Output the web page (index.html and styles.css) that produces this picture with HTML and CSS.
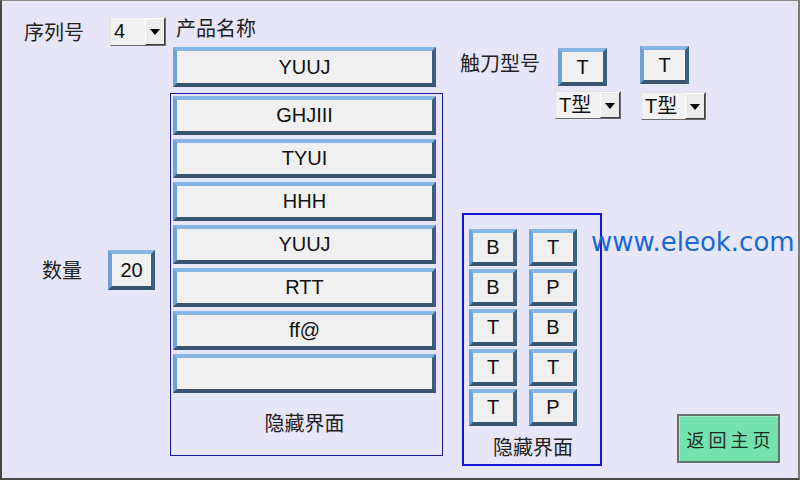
FILE: index.html
```html
<!DOCTYPE html>
<html lang="zh-CN">
<head>
  <meta charset="UTF-8">
  <title>产品设置</title>
  <link rel="stylesheet" href="styles.css">
</head>
<body>
  <div class="screen">
    <div class="col-left">
      <div class="seq-row">
        <span class="label seq-label">序列号</span>
        <div class="combo seq-combo"><span class="combo-text">4</span><span class="combo-arrow"></span></div>
      </div>
      <div class="qty-row">
        <span class="label qty-label">数量</span>
        <div class="btn qty-box">20</div>
      </div>
    </div>

    <div class="col-product">
      <div class="label product-label">产品名称</div>
      <div class="btn product-name">YUUJ</div>
      <div class="panel list-panel">
        <div class="btn list-btn">GHJIII</div>
        <div class="btn list-btn">TYUI</div>
        <div class="btn list-btn">HHH</div>
        <div class="btn list-btn">YUUJ</div>
        <div class="btn list-btn">RTT</div>
        <div class="btn list-btn">ff@</div>
        <div class="btn list-btn"></div>
        <div class="label panel-caption">隐藏界面</div>
      </div>
    </div>

    <div class="col-tool">
      <div class="tool-row">
        <span class="label tool-label">触刀型号</span>
        <div class="tool-group first">
          <div class="btn tool-btn">T</div>
          <div class="combo tool-combo"><span class="combo-text">T型</span><span class="combo-arrow"></span></div>
        </div>
        <div class="tool-group second">
          <div class="btn tool-btn">T</div>
          <div class="combo tool-combo"><span class="combo-text">T型</span><span class="combo-arrow"></span></div>
        </div>
      </div>
      <div class="lower">
        <div class="panel code-panel">
          <div class="code-grid">
            <div class="btn code-btn">B</div>
            <div class="btn code-btn">T</div>
            <div class="btn code-btn">B</div>
            <div class="btn code-btn">P</div>
            <div class="btn code-btn">T</div>
            <div class="btn code-btn">B</div>
            <div class="btn code-btn">T</div>
            <div class="btn code-btn">T</div>
            <div class="btn code-btn">T</div>
            <div class="btn code-btn">P</div>
          </div>
          <div class="label panel-caption small">隐藏界面</div>
        </div>
        <div class="side">
          <div class="site">www.eleok.com</div>
          <div class="home-btn">返回主页</div>
        </div>
      </div>
    </div>
  </div>
</body>
</html>
```

FILE: styles.css
```css
* {
  box-sizing: border-box;
}
body {
  margin: 0;
  background: #e6e6f8;
  font-family: "Liberation Sans", Arial, "Noto Sans CJK SC", sans-serif;
}
.screen {
  width: 800px;
  height: 480px;
  display: flex;
  overflow: hidden;
  background: #e6e6f8;
  border-left: 2px solid #464646;
  border-top: 1px solid #8a8a8a;
  border-right: 2px solid #7c7c7c;
  border-bottom: 2px solid #4a4a4a;
}
.label {
  font-family: "Noto Sans CJK SC", sans-serif;
  font-size: 20px;
  line-height: 24px;
  color: #222;
}

/* raised blue-edged key */
.btn {
  display: flex;
  align-items: center;
  justify-content: center;
  background: #f0f0f0;
  color: #111;
  font-size: 20px;
  border: 4px solid;
  border-color: #86b6e6 #3d5f80 #37556f #6fa3d6;
}

/* drop-down box */
.combo {
  display: flex;
  background: #f2f2f2;
  border-top: 1px solid #e2e2e2;
  border-left: 1px solid #e2e2e2;
  border-right: 1px solid #6a6a6a;
  border-bottom: 1px solid #6a6a6a;
}
.combo-text {
  flex: 1;
  font-size: 20px;
  line-height: 26px;
  padding-left: 3px;
  color: #111;
}
.combo-arrow {
  width: 20px;
  position: relative;
  background: #ececec;
  border-left: 1px solid #fff;
  border-top: 1px solid #fff;
  border-right: 1px solid #404040;
  border-bottom: 1px solid #404040;
}
.combo-arrow::after {
  content: "";
  position: absolute;
  left: 4px;
  top: 10px;
  border-left: 5px solid transparent;
  border-right: 5px solid transparent;
  border-top: 6px solid #000;
}

/* left column */
.col-left {
  width: 168px;
}
.seq-row {
  display: flex;
  align-items: center;
  margin-top: 16px;
  padding-left: 22px;
}
.seq-label {
  width: 86px;
}
.seq-combo {
  width: 56px;
  height: 29px;
}
.qty-row {
  display: flex;
  align-items: center;
  margin-top: 204px;
  padding-left: 40px;
}
.qty-label {
  width: 66px;
}
.qty-box {
  width: 47px;
  height: 40px;
}

/* product column */
.col-product {
  width: 273px;
}
.product-label {
  margin-top: 15px;
  padding-left: 6px;
}
.product-name {
  width: 263px;
  height: 40px;
  margin: 7px 0 0 3px;
}
.panel {
  display: flex;
  flex-direction: column;
}
.list-panel {
  height: 363px;
  margin-top: 6px;
  border: 1px solid #1c1c96;
  padding: 2px 0 0 2px;
  gap: 4px;
}
.list-btn {
  width: 263px;
  height: 39px;
}
.panel-caption {
  margin-top: 14px;
  text-align: center;
  padding-right: 6px;
}

/* tool column */
.col-tool {
  flex: 1;
  display: flex;
  flex-direction: column;
}
.tool-row {
  display: flex;
  align-items: flex-start;
  height: 119px;
  padding-left: 17px;
  padding-top: 45px;
}
.tool-label {
  width: 95px;
  margin-top: 5px;
}
.tool-group {
  display: flex;
  flex-direction: column;
}
.tool-group.first {
  margin-top: 2px;
  width: 66px;
}
.tool-group.second {
  margin-left: 19px;
  width: 66px;
}
.tool-btn {
  width: 49px;
  height: 38px;
  margin-left: 3px;
}
.tool-group.second .tool-btn {
  margin-left: 0;
}
.tool-combo {
  height: 28px;
  margin-top: 5px;
}
.tool-group.second .tool-combo {
  margin-top: 8px;
  margin-left: 1px;
}
.lower {
  display: flex;
  margin-top: 93px;
  padding-left: 19px;
}
.code-panel {
  width: 140px;
  height: 253px;
  border: 2px solid #1414cc;
  padding: 14px 0 0 5px;
}
.code-grid {
  display: grid;
  grid-template-columns: 48px 48px;
  grid-auto-rows: 37px;
  column-gap: 12px;
  row-gap: 3px;
}
.code-btn {
  font-size: 20px;
}
.panel-caption.small {
  margin-top: 9px;
  padding-right: 3px;
}
.side {
  flex: 1;
  display: flex;
  flex-direction: column;
  margin-left: -11px;
}
.site {
  margin-top: 14px;
  font-family: "DejaVu Sans", Verdana, sans-serif;
  font-size: 26px;
  line-height: 30px;
  color: #1a68d2;
  white-space: nowrap;
}
.home-btn {
  margin: auto 0 3px 86px;
  width: 103px;
  height: 49px;
  display: flex;
  align-items: center;
  justify-content: center;
  background: #74e2ac;
  border: 2px solid #66706c;
  box-shadow: inset 1px 1px 0 #a8f0cc;
  font-family: "Noto Sans CJK SC", sans-serif;
  font-size: 18px;
  letter-spacing: 4px;
  padding-left: 4px;
  color: #1c2a22;
}
```
